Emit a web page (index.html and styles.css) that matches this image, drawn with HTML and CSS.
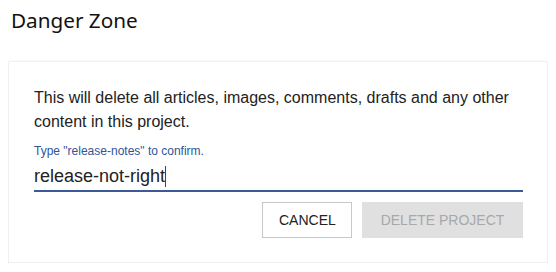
FILE: index.html
```html
<!DOCTYPE html>
<html lang="en">
<head>
    <meta charset="UTF-8">
    <meta name="viewport" content="width=device-width, initial-scale=1.0">
    <title>Danger Zone</title>
    <link rel="stylesheet" href="styles.css">
</head>
<body>
    <h2 class="zone-title">Danger Zone</h2>
    <div class="zone-card">
        <p class="zone-text">This will delete all articles, images, comments, drafts and any other content in this project.</p>
        <div class="confirm-field">
            <label class="confirm-label" for="confirm-input">Type "release-notes" to confirm.</label>
            <div class="confirm-input" id="confirm-input">release-not-right<span class="caret"></span></div>
        </div>
        <div class="zone-actions">
            <button class="btn btn-cancel">Cancel</button>
            <button class="btn btn-delete" disabled>Delete Project</button>
        </div>
    </div>
</body>
</html>
```

FILE: styles.css
```css
body {
    margin: 8px;
    font-family: "Liberation Sans", Arial, sans-serif;
    color: #222;
    background: #fff;
}

.zone-title {
    margin: 0 0 0 3px;
    height: 53px;
    font-family: "Noto Sans", sans-serif;
    font-size: 20.7px;
    font-weight: 400;
    line-height: 24px;
    color: #111;
}

.zone-card {
    padding: 24px 24px 24px 25px;
    border: 1px solid #f0f0f0;
    border-radius: 2px;
    box-shadow: 0 1px 2px rgba(0, 0, 0, 0.3);
}

.zone-text {
    margin: 0 0 9px;
    font-size: 16px;
    line-height: 24px;
    color: #222;
}

.confirm-field {
    display: flex;
    flex-direction: column;
}

.confirm-label {
    font-size: 12px;
    line-height: 16px;
    color: #2f5597;
}

.confirm-input {
    display: flex;
    align-items: center;
    height: 24px;
    padding: 5px 0 2px;
    font-size: 18px;
    color: #222;
    border-bottom: 2px solid #3b5a98;
}

.caret {
    width: 1px;
    height: 21px;
    background: #444;
}

.zone-actions {
    display: flex;
    justify-content: flex-end;
    gap: 10px;
    margin-top: 10px;
}

.btn {
    height: 36px;
    padding: 0 16px;
    font-family: "Liberation Sans", Arial, sans-serif;
    font-size: 14px;
    text-transform: uppercase;
    border-radius: 0;
    cursor: pointer;
}

.btn-cancel {
    width: 90px;
    background: #fff;
    color: #222;
    border: 1px solid #c8c8c8;
}

.btn-delete {
    width: 161px;
    background: #e0e0e0;
    color: #a8a8a8;
    border: none;
    cursor: not-allowed;
}
```
